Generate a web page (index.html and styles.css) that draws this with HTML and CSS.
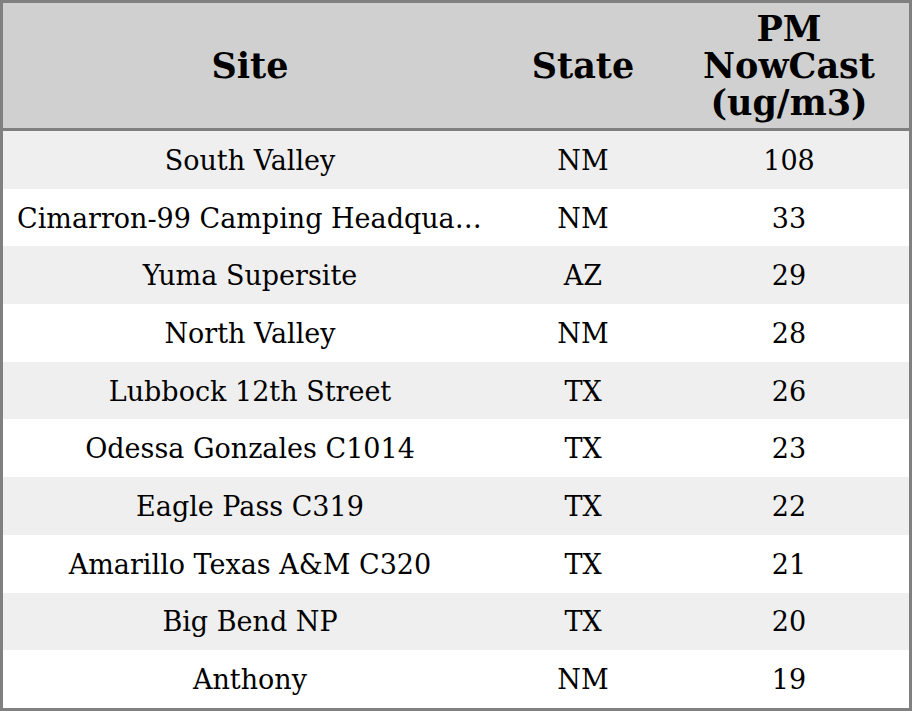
FILE: index.html
```html
<!DOCTYPE html>
<html>
<head>
<meta charset="utf-8">
<link rel="stylesheet" href="styles.css">
</head>
<body>
<table class="grid">
  <colgroup>
    <col class="c-site">
    <col class="c-state">
    <col class="c-pm">
  </colgroup>
  <thead>
    <tr><th>Site</th><th>State</th><th>PM<br>NowCast<br>(ug/m3)</th></tr>
  </thead>
  <tbody>
    <tr><td>South Valley</td><td>NM</td><td>108</td></tr>
    <tr><td>Cimarron-99 Camping Headquarters</td><td>NM</td><td>33</td></tr>
    <tr><td>Yuma Supersite</td><td>AZ</td><td>29</td></tr>
    <tr><td>North Valley</td><td>NM</td><td>28</td></tr>
    <tr><td>Lubbock 12th Street</td><td>TX</td><td>26</td></tr>
    <tr><td>Odessa Gonzales C1014</td><td>TX</td><td>23</td></tr>
    <tr><td>Eagle Pass C319</td><td>TX</td><td>22</td></tr>
    <tr><td>Amarillo Texas A&amp;M C320</td><td>TX</td><td>21</td></tr>
    <tr><td>Big Bend NP</td><td>TX</td><td>20</td></tr>
    <tr><td>Anthony</td><td>NM</td><td>19</td></tr>
  </tbody>
</table>
</body>
</html>
```
FILE: styles.css
```css
html, body {
  margin: 0;
  padding: 0;
  background: #ffffff;
}
.grid {
  width: 912px;
  height: 711px;
  table-layout: fixed;
  border-collapse: separate;
  border-spacing: 0;
  border: 3px solid #808080;
  font-family: "DejaVu Serif", serif;
  color: #000;
  box-sizing: border-box;
}
.c-site { width: 494px; }
.c-state { width: 172px; }
.c-pm { width: 240px; }
.grid th {
  background: #d0d0d0;
  font-weight: bold;
  font-size: 35px;
  line-height: 37px;
  height: 125px;
  padding: 0 14px;
  border-bottom: 3px solid #808080;
  text-align: center;
  vertical-align: middle;
  box-sizing: content-box;
}
.grid td {
  font-size: 27px;
  line-height: 30px;
  height: 55px;
  padding: 2px 14px 0;
  text-align: center;
  vertical-align: middle;
  white-space: nowrap;
  overflow: hidden;
  text-overflow: ellipsis;
}
.grid tbody tr:nth-child(odd) td {
  background: #efefef;
}
```
